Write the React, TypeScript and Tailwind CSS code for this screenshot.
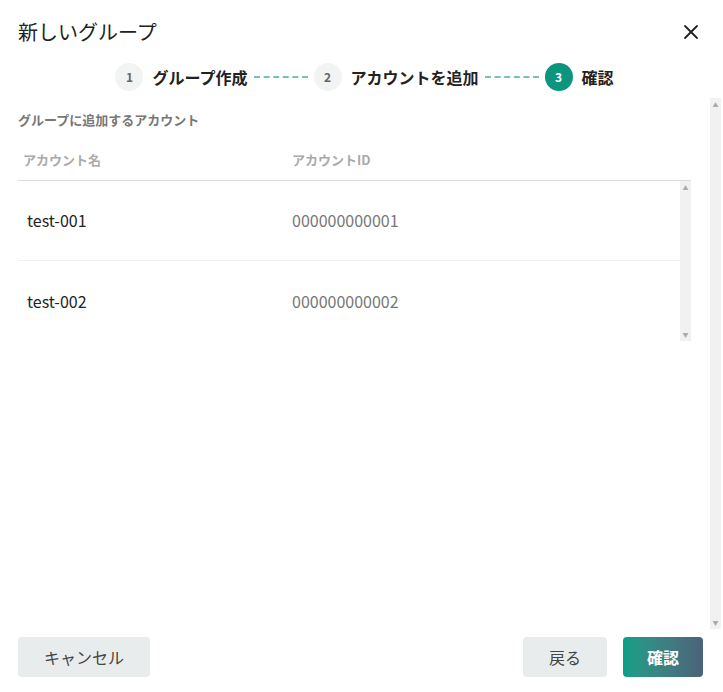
import React from 'react';
import { X } from 'lucide-react';

const accounts = [
  { name: 'test-001', id: '000000000001' },
  { name: 'test-002', id: '000000000002' },
];

const Step: React.FC<{ n: number; label: string; active?: boolean }> = ({ n, label, active }) => (
  <div className="flex items-center gap-[9px]">
    <div
      className={`w-[28px] h-[28px] rounded-full flex items-center justify-center text-[12px] font-bold ${
        active ? 'bg-[#0b957f] text-white' : 'bg-[#f2f3f3] text-[#666]'
      }`}
    >
      {n}
    </div>
    <span className="text-[16px] font-bold text-[#222]">{label}</span>
  </div>
);

const Dashes = () => <div className="w-[54px] mx-[6px] border-t-2 border-dashed border-[#7fbfb3]" />;

export default function App() {
  return (
    <div
      className="w-[723px] h-[692px] bg-white flex flex-col"
      style={{ fontFamily: '"Noto Sans CJK JP", "Noto Sans", sans-serif' }}
    >
      <div className="flex items-center justify-between pl-[18px] pr-[20px] pt-[16px] h-[48px]">
        <h1 className="text-[20px] text-[#222]">新しいグループ</h1>
        <X size={24} strokeWidth={1.8} className="text-[#222]" />
      </div>
      <div className="flex items-center justify-center h-[34px] mt-[12px] pl-[6px]">
        <Step n={1} label="グループ作成" />
        <Dashes />
        <Step n={2} label="アカウントを追加" />
        <Dashes />
        <Step n={3} label="確認" active />
      </div>
      <div className="flex flex-1 mt-[4px] min-h-0">
        <div className="flex-1 pl-[18px] pr-[19px]">
          <div className="text-[13px] font-bold text-[#777] mt-[12px]">グループに追加するアカウント</div>
          <div className="flex text-[13px] font-bold text-[#aaa] h-[40px] items-center mt-[11px] border-b border-[#ddd] px-[5px]">
            <div className="w-[269px]">アカウント名</div>
            <div>アカウントID</div>
          </div>
          <div className="flex">
            <div className="flex-1">
              {accounts.map((a) => (
                <div key={a.id} className="flex items-center h-[80px] border-b border-[#f0f0f0] last:border-b-0 px-[9px]">
                  <div className="w-[265px] text-[16px] text-[#222]">{a.name}</div>
                  <div className="text-[16px] text-[#777]">{a.id}</div>
                </div>
              ))}
            </div>
            <div className="w-[11px] bg-[#f1f1f1] flex flex-col justify-between items-center text-[6px] text-[#aaa] py-[2px]">
              <span>▲</span>
              <span>▼</span>
            </div>
          </div>
        </div>
        <div className="w-[11px] mr-[2px] bg-[#f1f1f1] flex flex-col justify-between items-center text-[6px] text-[#aaa] py-[2px] mb-[8px]">
          <span>▲</span>
          <span>▼</span>
        </div>
      </div>
      <div className="flex items-center justify-between pl-[18px] pr-[20px] h-[40px] mb-[15px]">
        <button className="w-[132px] h-[40px] rounded-[4px] bg-[#e9ecec] text-[16px] text-[#444]">キャンセル</button>
        <div className="flex gap-[16px]">
          <button className="w-[84px] h-[40px] rounded-[4px] bg-[#e9ecec] text-[16px] text-[#444]">戻る</button>
          <button className="w-[80px] h-[40px] rounded-[4px] bg-gradient-to-r from-[#06a088] to-[#4a6279] text-[16px] font-bold text-white">確認</button>
        </div>
      </div>
    </div>
  );
}
